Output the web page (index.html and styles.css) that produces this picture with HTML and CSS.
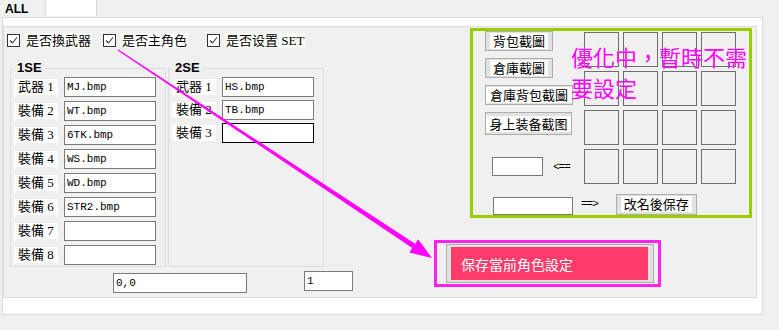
FILE: index.html
```html
<!DOCTYPE html>
<html lang="zh-Hant">
<head>
<meta charset="utf-8">
<title>ALL</title>
<link rel="stylesheet" href="styles.css">
</head>
<body>
<div class="tabs">
  <div class="tab tab-all">ALL</div>
  <div class="tab tab-blank"></div>
</div>
<div class="page">
  <div class="panel">
    <div class="left">
      <div class="cb-row">
        <label class="cb"><span class="box"><svg viewBox="0 0 11 11" width="11" height="11"><path d="M2 5.5 L4.5 8 L9 2.5" fill="none" stroke="#333" stroke-width="1.1"/></svg></span><span class="cb-label">是否換武器</span></label>
        <label class="cb"><span class="box"><svg viewBox="0 0 11 11" width="11" height="11"><path d="M2 5.5 L4.5 8 L9 2.5" fill="none" stroke="#333" stroke-width="1.1"/></svg></span><span class="cb-label">是否主角色</span></label>
        <label class="cb third"><span class="box"><svg viewBox="0 0 11 11" width="11" height="11"><path d="M2 5.5 L4.5 8 L9 2.5" fill="none" stroke="#333" stroke-width="1.1"/></svg></span><span class="cb-label">是否设置 SET</span></label>
      </div>
      <div class="groups">
        <fieldset class="grp">
          <legend>1SE</legend>
          <div class="rows">
            <span class="lbl">武器 1</span><div class="inp">MJ.bmp</div>
            <span class="lbl">裝備 2</span><div class="inp">WT.bmp</div>
            <span class="lbl">裝備 3</span><div class="inp">6TK.bmp</div>
            <span class="lbl">裝備 4</span><div class="inp">WS.bmp</div>
            <span class="lbl">裝備 5</span><div class="inp">WD.bmp</div>
            <span class="lbl">裝備 6</span><div class="inp">STR2.bmp</div>
            <span class="lbl">裝備 7</span><div class="inp"></div>
            <span class="lbl">裝備 8</span><div class="inp"></div>
          </div>
        </fieldset>
        <fieldset class="grp">
          <legend>2SE</legend>
          <div class="rows rows-2">
            <span class="lbl">武器 1</span><div class="inp">HS.bmp</div>
            <span class="lbl">裝備 2</span><div class="inp">TB.bmp</div>
            <span class="lbl">裝備 3</span><div class="inp focus"></div>
          </div>
        </fieldset>
      </div>
      <div class="bottom">
        <div class="inp coord">0,0</div>
        <div class="inp num">1</div>
      </div>
    </div>
    <div class="right">
      <div class="green">
        <div class="tools">
          <div class="btn b1"><span>背包截圖</span></div>
          <div class="btn b1"><span>倉庫截圖</span></div>
          <div class="btn b3"><span>倉庫背包截圖</span></div>
          <div class="btn b4"><span>身上装备截图</span></div>
          <div class="arrow-row">
            <div class="inp small"></div>
            <span class="sym">&lt;==</span>
          </div>
        </div>
        <div class="cells">
          <div class="cell"></div><div class="cell"></div><div class="cell"></div><div class="cell"></div>
          <div class="cell"></div><div class="cell"></div><div class="cell"></div><div class="cell"></div>
          <div class="cell"></div><div class="cell"></div><div class="cell"></div><div class="cell"></div>
          <div class="cell"></div><div class="cell"></div><div class="cell"></div><div class="cell"></div>
        </div>
        <div class="rename-row">
          <div class="inp wide"></div>
          <span class="sym sym2">==&gt;</span>
          <div class="btn b5"><span>改名後保存</span></div>
        </div>
        <div class="note">優化中，暫時不需<br>要設定</div>
      </div>
      <div class="save-wrap">
        <div class="save-btn"><div class="save-fill">保存當前角色設定</div></div>
      </div>
    </div>
  </div>
</div>
<svg class="arrow" width="779" height="330" viewBox="0 0 779 330">
  <polygon points="117.6,50.4 118.4,49.6 415.1,243.8 412.3,248.0" fill="#ff00ff"/>
  <polygon points="432,258 409.3,252.6 418.1,239.2" fill="#ff00ff"/>
</svg>
</body>
</html>
```
FILE: styles.css
```css
* { box-sizing: border-box; }
body {
  margin: 0;
  width: 779px;
  height: 330px;
  overflow: hidden;
  position: relative;
  background: #f0f0f0;
  color: #000;
  font-family: "Liberation Serif", "Noto Sans CJK TC", serif;
  font-size: 13px;
}
.tabs { display: flex; height: 17px; }
.tab { height: 16px; }
.tab-all {
  width: 46px;
  border-right: 1px solid #d9d9d9;
  font: bold 12px/12px "Liberation Sans", sans-serif;
  padding: 3px 0 0 5px;
}
.tab-blank { width: 51px; background: #fff; border-right: 1px solid #d9d9d9; }
.page {
  margin-left: 2px;
  width: 761px;
  height: 298px;
  border: 1px solid #d9d9d9;
  background: #fff;
  padding: 8px 5px 16px 0;
}
.panel {
  height: 100%;
  border: 1px solid #dcdcdc;
  background: #f0f0f0;
  display: flex;
}
.left {
  width: 430px;
  flex: none;
  padding: 6px 0 0 3px;
  display: flex;
  flex-direction: column;
}
.cb-row { display: flex; align-items: center; height: 14px; gap: 11px; }
.cb { display: flex; align-items: center; gap: 5px; }
.cb.third { margin-left: 8px; }
.box {
  width: 13px; height: 13px;
  border: 1px solid #333;
  background: #fff;
  display: flex;
}
.cb-label { background: #fff; padding: 0 1px; line-height: 15px; white-space: nowrap; }
.groups { display: flex; gap: 2px; margin: 14px 0 0 3px; }
.grp {
  width: 156px;
  height: 206px;
  margin: 0;
  border: 1px solid #dcdcdc;
  padding: 2px 0 0 3px;
  min-inline-size: 0;
}
.grp legend {
  font: bold 13px/14px "Liberation Sans", sans-serif;
  padding: 0 3px;
}
.rows {
  display: grid;
  grid-template-columns: 50px 92px;
  grid-auto-rows: 20px;
  row-gap: 4px;
  align-items: center;
}
.rows-2 { row-gap: 3px; }
.lbl { justify-self: start; background: #fff; padding: 0 4px; line-height: 16px; white-space: nowrap; }
.inp {
  height: 20px;
  width: 92px;
  border: 1px solid #7a7a7a;
  background: #fff;
  font: 11px/18px "Liberation Mono", monospace;
  padding-left: 2px;
  white-space: nowrap;
}
.inp.focus { border-color: #000; }
.bottom { display: flex; align-items: flex-start; gap: 57px; margin: 6px 0 0 106px; }
.inp.coord { width: 134px; }
.inp.num { width: 49px; margin-top: -2px; }
.right { flex: none; padding-top: 1px; }
.green {
  position: relative;
  margin-left: 36px;
  width: 282px;
  height: 190px;
  border: 3px solid #9acd00;
  padding-left: 12px;
  display: grid;
  grid-template-columns: 99px 152px;
  align-items: start;
}
.tools { display: flex; flex-direction: column; gap: 7px; align-items: flex-start; }
.btn {
  height: 20px;
  border: 1px solid #adadad;
  background: #e1e1e1;
  display: flex;
  align-items: center;
  justify-content: center;
  font-family: "Noto Sans CJK TC", sans-serif;
}
.btn span { background: #fff; padding: 0 3px; line-height: 16px; white-space: nowrap; }
.b1 { width: 68px; }
.b3 { width: 88px; }
.b3 span { padding: 0 4px; }
.b4 { width: 87px; height: 23px; }
.b5 { width: 81px; height: 21px; margin-left: 18px; }
.arrow-row { display: flex; align-items: center; gap: 10px; margin: 15px 0 0 7px; }
.inp.small { width: 51px; height: 19px; }
.sym { font: 11px "Liberation Mono", monospace; letter-spacing: -1px; }
.cells {
  display: grid;
  grid-template-columns: repeat(4, 35px);
  grid-auto-rows: 35px;
  gap: 4px;
  margin-top: 1px;
}
.cell { border: 1px solid #6e6e6e; }
.rename-row {
  grid-column: 1 / -1;
  display: flex;
  align-items: flex-start;
  margin: 9px 0 0 8px;
}
.inp.wide { width: 80px; height: 18px; margin-top: 3px; }
.sym2 { margin: 4px 0 0 8px; }
.note {
  position: absolute;
  left: 98px;
  top: 10px;
  color: #f0f;
  font: 22px/31px "Noto Sans CJK TC", sans-serif;
  white-space: nowrap;
}
.save-wrap {
  margin-top: 22px;
  width: 227px;
  height: 47px;
  border: 3px solid #ff22ee;
  padding: 1px 4px 1px 9px;
}
.save-btn {
  height: 100%;
  border: 1px solid #adadad;
  background: #e1e1e1;
  padding: 2px 5px 2px 4px;
}
.save-fill {
  height: 100%;
  background: #ff3b6b;
  color: #fff;
  font: 14px "Noto Sans CJK TC", sans-serif;
  display: flex;
  align-items: center;
  padding-left: 10px;
}
.arrow { position: absolute; left: 0; top: 0; pointer-events: none; }
```
